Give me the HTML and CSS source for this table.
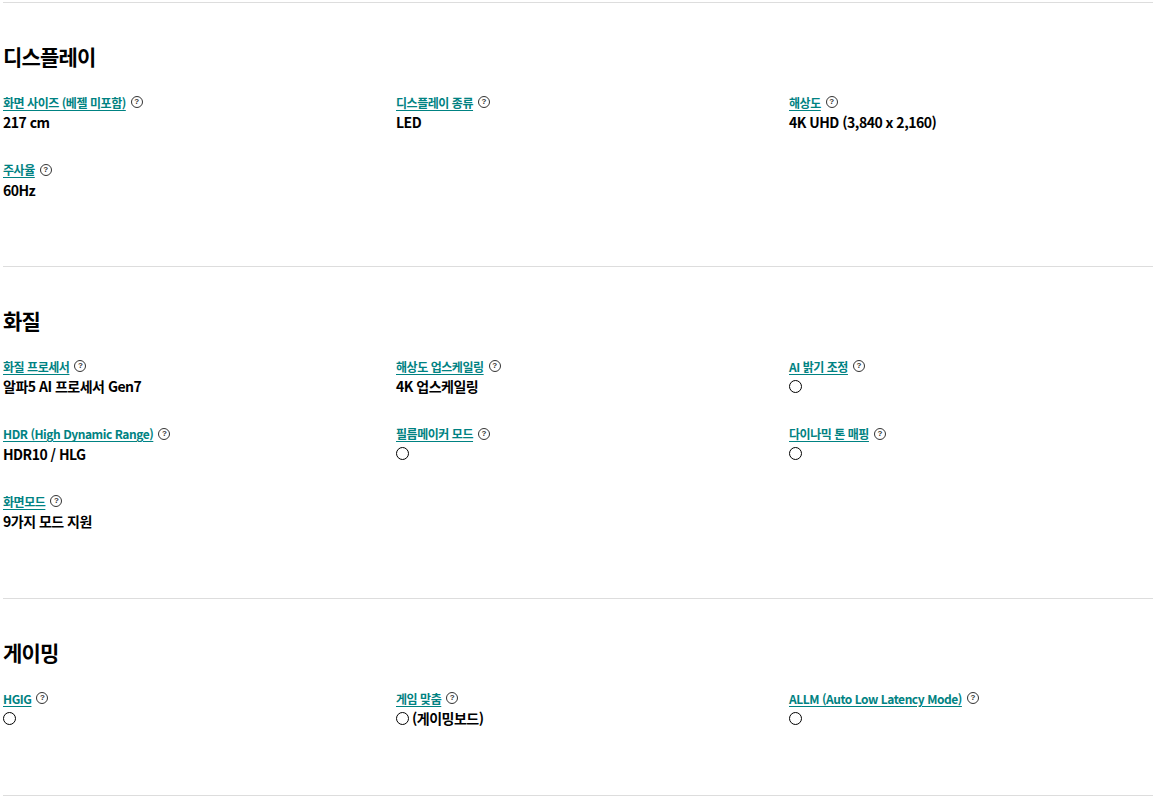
FILE: index.html
```html
<!DOCTYPE html>
<html lang="ko">
<head>
<meta charset="utf-8">
<title>스펙</title>
<link rel="stylesheet" href="styles.css">
</head>
<body>
<div class="specs">
  <section class="spec-section">
    <h2 class="spec-title">디스플레이</h2>
    <div class="spec-grid">
      <div class="spec-item"><div class="spec-label"><a href="#">화면 사이즈 (베젤 미포함)</a><span class="help">?</span></div><div class="spec-value">217 cm</div></div>
      <div class="spec-item"><div class="spec-label"><a href="#">디스플레이 종류</a><span class="help">?</span></div><div class="spec-value">LED</div></div>
      <div class="spec-item"><div class="spec-label"><a href="#">해상도</a><span class="help">?</span></div><div class="spec-value">4K UHD (3,840 x 2,160)</div></div>
      <div class="spec-item"><div class="spec-label"><a href="#">주사율</a><span class="help">?</span></div><div class="spec-value">60Hz</div></div>
    </div>
  </section>
  <section class="spec-section">
    <h2 class="spec-title">화질</h2>
    <div class="spec-grid">
      <div class="spec-item"><div class="spec-label"><a href="#">화질 프로세서</a><span class="help">?</span></div><div class="spec-value">알파5 AI 프로세서 Gen7</div></div>
      <div class="spec-item"><div class="spec-label"><a href="#">해상도 업스케일링</a><span class="help">?</span></div><div class="spec-value">4K 업스케일링</div></div>
      <div class="spec-item"><div class="spec-label"><a href="#">AI 밝기 조정</a><span class="help">?</span></div><div class="spec-value"><span class="yes"></span></div></div>
      <div class="spec-item"><div class="spec-label"><a href="#">HDR (High Dynamic Range)</a><span class="help">?</span></div><div class="spec-value">HDR10 / HLG</div></div>
      <div class="spec-item"><div class="spec-label"><a href="#">필름메이커 모드</a><span class="help">?</span></div><div class="spec-value"><span class="yes"></span></div></div>
      <div class="spec-item"><div class="spec-label"><a href="#">다이나믹 톤 매핑</a><span class="help">?</span></div><div class="spec-value"><span class="yes"></span></div></div>
      <div class="spec-item"><div class="spec-label"><a href="#">화면모드</a><span class="help">?</span></div><div class="spec-value">9가지 모드 지원</div></div>
    </div>
  </section>
  <section class="spec-section">
    <h2 class="spec-title">게이밍</h2>
    <div class="spec-grid">
      <div class="spec-item"><div class="spec-label"><a href="#">HGIG</a><span class="help">?</span></div><div class="spec-value"><span class="yes"></span></div></div>
      <div class="spec-item"><div class="spec-label"><a href="#">게임 맞춤</a><span class="help">?</span></div><div class="spec-value"><span class="yes"></span>(게이밍보드)</div></div>
      <div class="spec-item"><div class="spec-label"><a href="#">ALLM (Auto Low Latency Mode)</a><span class="help">?</span></div><div class="spec-value"><span class="yes"></span></div></div>
    </div>
  </section>
  <div class="spec-end"></div>
</div>
</body>
</html>
```

FILE: styles.css
```css
* { box-sizing: border-box; }
html, body { margin: 0; padding: 0; background: #fff; }
body {
  font-family: "Noto Sans CJK KR", "Noto Sans", sans-serif;
  color: #000;
}
.specs {
  width: 1150px;
  margin: 2px 0 0 3px;
}
.spec-section {
  border-top: 1px solid #dddddd;
  padding: 40px 0 66.75px;
}
.spec-title {
  margin: 0 0 23px;
  font-size: 21px;
  line-height: 26px;
  font-weight: 700;
  letter-spacing: -0.8px;
}
.spec-grid {
  display: grid;
  grid-template-columns: 393px 393px 1fr;
  row-gap: 27.5px;
}
.spec-item {
  display: flex;
  flex-direction: column;
}
.spec-label {
  display: flex;
  align-items: center;
  height: 20px;
  font-size: 12px;
  font-weight: 700;
  letter-spacing: -0.45px;
}
.spec-label a {
  color: #008282;
  text-decoration: underline;
  text-underline-offset: 2px;
}
.help {
  display: inline-flex;
  align-items: center;
  justify-content: center;
  width: 12px;
  height: 12px;
  margin-left: 5px;
  border: 1px solid #333;
  border-radius: 50%;
  font-size: 8px;
  line-height: 1;
  font-weight: 700;
  color: #333;
  letter-spacing: 0;
  font-family: "Liberation Sans", sans-serif;
}
.spec-value {
  display: flex;
  align-items: center;
  height: 20px;
  font-size: 14px;
  font-weight: 700;
  letter-spacing: -0.5px;
  white-space: pre;
}
.yes {
  display: inline-block;
  width: 13px;
  height: 13px;
  border: 1.5px solid #000;
  border-radius: 50%;
  margin-right: 3px;
}
.spec-end {
  border-top: 1px solid #dddddd;
}
```
